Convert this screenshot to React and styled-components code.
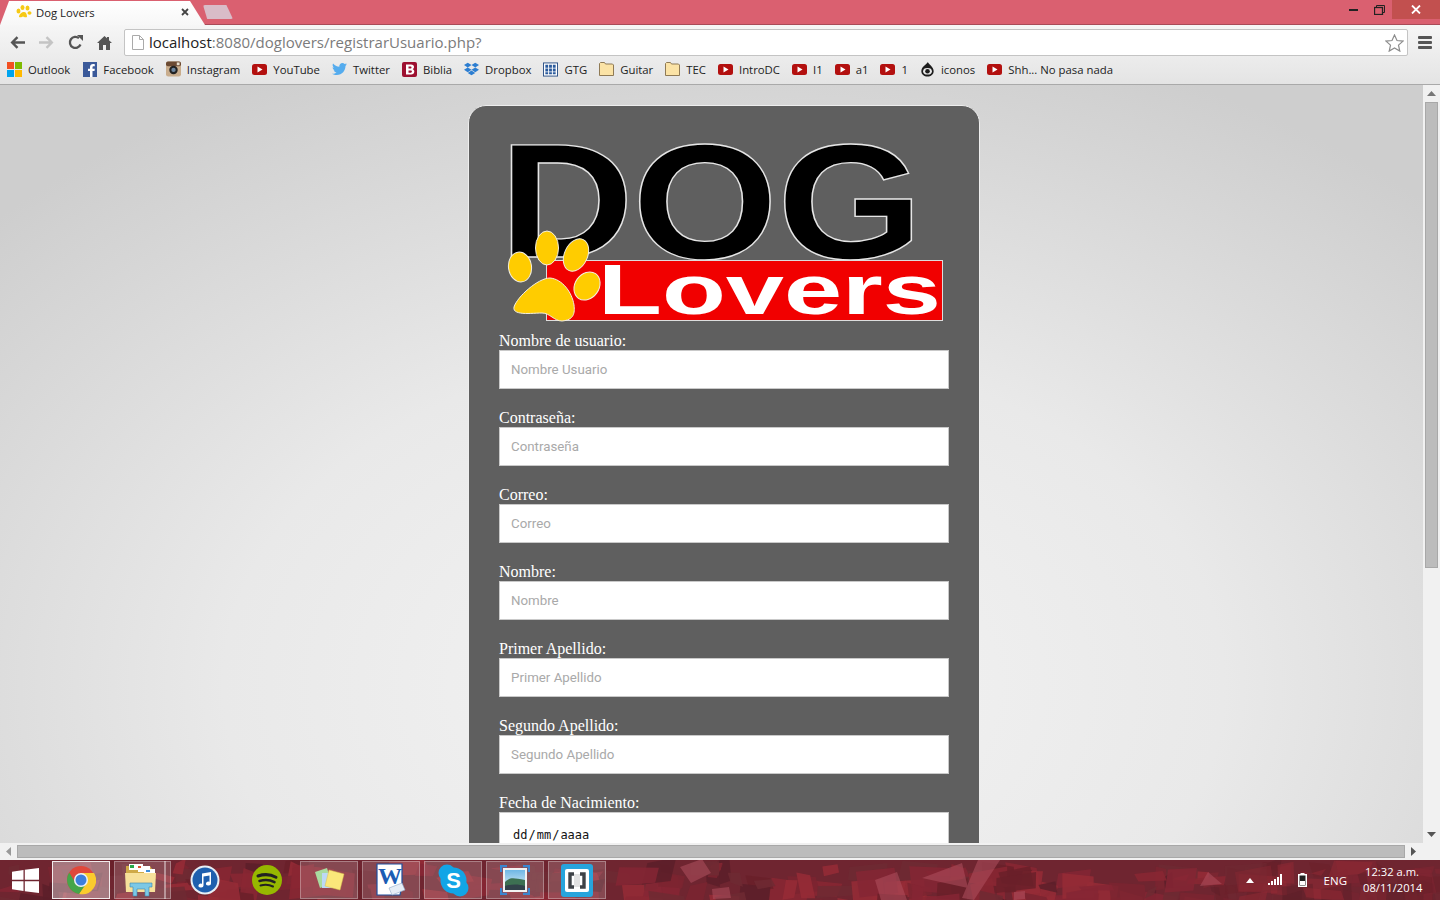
import React from "react";
import styled, { createGlobalStyle } from "styled-components";
import { FaTwitter, FaDropbox } from "react-icons/fa";

const Global = createGlobalStyle`
  html, body { margin: 0; height: 100%; overflow: hidden; }
  * { box-sizing: border-box; }
`;

const Screen = styled.div`
  width: 1440px;
  height: 900px;
  display: flex;
  flex-direction: column;
  overflow: hidden;
  font-family: "Open Sans", "Liberation Sans", sans-serif;
`;

/* ---------- window title strip ---------- */
const TabStrip = styled.div`
  height: 25px;
  flex: none;
  display: flex;
  align-items: flex-end;
  background: #da6070;
  border-bottom: 1px solid #a94b58;
`;
const Tab = styled.div`
  width: 205px;
  height: 24px;
  margin-bottom: -1px;
  padding: 0 16px 2px 16px;
  display: flex;
  align-items: center;
  gap: 4px;
  background: linear-gradient(#ffffff, #f7f7f7);
  clip-path: polygon(0 100%, 9px 0, 190px 0, 100% 100%);
  font-size: 11.3px;
  color: #222;
`;
const TabTitle = styled.span`
  flex: 1;
`;
const TabClose = styled.svg`
  width: 8px;
  height: 8px;
`;
const NewTab = styled.div`
  width: 30px;
  height: 14px;
  margin: 0 0 5px -2px;
  background: #d9bcc8;
  border-radius: 2px;
  clip-path: polygon(0 0, 78% 0, 100% 100%, 14% 100%);
`;
const StripSpace = styled.div`
  flex: 1;
`;
const WinControls = styled.div`
  align-self: flex-start;
  display: flex;
  height: 19px;
`;
const WinIcon = styled.div`
  width: ${(p) => p.$w}px;
  display: flex;
  align-items: center;
  justify-content: center;
  background: ${(p) => p.$bg || "transparent"};
`;

/* ---------- toolbar ---------- */
const Toolbar = styled.div`
  height: 32px;
  flex: none;
  display: flex;
  align-items: center;
  padding: 3px 0 0 3px;
  background: linear-gradient(#f6f6f6, #ececec);
`;
const NavBtn = styled.div`
  width: 29px;
  height: 24px;
  flex: none;
  display: flex;
  align-items: center;
  justify-content: center;
`;
const Omnibox = styled.div`
  width: 1284px;
  height: 27px;
  flex: none;
  margin: 0 2px 0 5px;
  padding: 0 3px 0 7px;
  display: flex;
  align-items: center;
  background: #fff;
  border: 1px solid #c4c4c4;
  border-radius: 2px;
`;
const Url = styled.div`
  flex: 1;
  margin-left: 5px;
  padding-bottom: 2px;
  font-size: 15px;
  color: #7b7b7b;
  white-space: nowrap;
`;
const Host = styled.span`
  color: #222;
`;

/* ---------- bookmarks ---------- */
const Bookmarks = styled.div`
  height: 28px;
  flex: none;
  display: flex;
  align-items: center;
  padding: 0 0 3px 7px;
  gap: 12px;
  background: linear-gradient(#ececec, #e4e4e4);
  border-bottom: 1px solid #a9a9a9;
`;
const Mark = styled.div`
  display: flex;
  align-items: center;
  gap: 6px;
  font-size: 11.35px;
  color: #222;
  white-space: nowrap;
`;
const MarkIcon = styled.div`
  width: 15px;
  height: 15px;
  display: flex;
  align-items: center;
  justify-content: center;
`;

/* ---------- page ---------- */
const Middle = styled.div`
  flex: 1;
  min-height: 0;
  display: flex;
`;
const Viewport = styled.div`
  flex: 1;
  min-width: 0;
  overflow: hidden;
  padding-top: 20px;
  background: radial-gradient(ellipse 1000px 680px at 724px 600px, #f4f4f4 0%, #e9e9e9 50%, #cecece 100%);
`;
const Card = styled.div`
  width: 512px;
  margin-left: 468px;
  padding: 0 30px 40px;
  background: #5f5f5f;
  border: 1px solid #eeeeee;
  border-radius: 18px;
`;
const Logo = styled.svg`
  display: block;
  width: 455px;
  height: 219px;
  margin: 0 0 7px -4px;
  overflow: visible;
`;
const Field = styled.div`
  margin-bottom: 20px;
`;
const Label = styled.label`
  display: block;
  height: 18px;
  font: 16px/18px "Liberation Serif", serif;
  color: #fff;
`;
const TextInput = styled.input`
  display: block;
  width: 450px;
  height: 39px;
  padding: 0 11px 1px;
  background: #fff;
  border: 1px solid #c9c9c9;
  border-radius: 0;
  outline: none;
  font: 13.3px "Roboto", "Liberation Sans", sans-serif;
  &::placeholder {
    color: #a9a9a9;
    opacity: 1;
  }
`;
const DateBox = styled.div`
  width: 450px;
  height: 39px;
  padding: 7px 0 0 13px;
  display: flex;
  align-items: center;
  gap: 1px;
  background: #fff;
  border: 1px solid #c9c9c9;
  font: 12px "DejaVu Sans Mono", monospace;
  color: #111;
`;

/* ---------- scrollbars ---------- */
const VBar = styled.div`
  width: 17px;
  flex: none;
  padding: 17px 2px 0;
  position: relative;
  background: #f1f1f1;
`;
const VThumb = styled.div`
  height: 466px;
  background: #bcbcbc;
  border: 1px solid #a8a8a8;
`;
const HBar = styled.div`
  height: 17px;
  flex: none;
  display: flex;
  align-items: center;
  background: #f1f1f1;
`;
const HThumb = styled.div`
  width: 1388px;
  height: 13px;
  margin-left: 4px;
  background: #bcbcbc;
  border: 1px solid #a8a8a8;
`;
const ArrowBtn = styled.svg`
  position: absolute;
  width: 9px;
  height: 9px;
  left: 4px;
  top: ${(p) => p.$top}px;
`;
const HArrow = styled.svg`
  width: 9px;
  height: 9px;
  margin-left: ${(p) => p.$ml}px;
`;

/* ---------- taskbar ---------- */
const Taskbar = styled.div`
  height: 40px;
  flex: none;
  position: relative;
  display: flex;
  align-items: center;
  overflow: hidden;
  background: #6f2530;
`;
const Wallpaper = styled.svg`
  position: absolute;
  inset: 0;
  width: 1440px;
  height: 40px;
`;
const StartBtn = styled.div`
  position: relative;
  width: 52px;
  padding-left: 12px;
  line-height: 0;
`;
const Apps = styled.div`
  position: relative;
  display: flex;
  gap: 4px;
`;
const AppBtn = styled.div`
  position: relative;
  width: ${(p) => (p.$stack ? 52 : 58)}px;
  height: 38px;
  margin-right: ${(p) => (p.$stack ? 6 : 0)}px;
  display: flex;
  align-items: center;
  justify-content: center;
  background: ${(p) =>
    p.$active ? "rgba(255,255,255,.38)" : p.$open ? "rgba(255,255,255,.16)" : "transparent"};
  border: ${(p) =>
    p.$active ? "1px solid rgba(255,255,255,.85)" : p.$open ? "1px solid rgba(255,255,255,.3)" : "none"};
  ${(p) =>
    p.$stack &&
    `&::after {
      content: "";
      position: absolute;
      top: -1px;
      bottom: -1px;
      right: -6px;
      width: 5px;
      background: rgba(255,255,255,.16);
      border: 1px solid rgba(255,255,255,.3);
    }`}
`;
const Tray = styled.div`
  position: relative;
  margin-left: auto;
  display: flex;
  align-items: center;
  padding-right: 19px;
  color: #fff;
`;
const Lang = styled.div`
  margin: 0 16px 0 17px;
  font-size: 11.5px;
`;
const Clock = styled.div`
  width: 58px;
  text-align: center;
  font-size: 11.2px;
  line-height: 16px;
`;

const Youtube = () => (
  <svg width="15" height="11" viewBox="0 0 15 11">
    <rect width="15" height="11" rx="2.5" fill="#b3100f" />
    <path d="M5.5 2.6 10.5 5.5 5.5 8.4z" fill="#fff" />
  </svg>
);
const Folder = () => (
  <svg width="15" height="14" viewBox="0 0 15 14">
    <path d="M.5 3V1.5l1-1h4l1 1.5h7l1 1v10.500h-14z" fill="#fbe3a6" stroke="#8f7a55" />
  </svg>
);
const PawSmall = () => (
  <svg width="16" height="14" viewBox="0 0 16 14" fill="#f6c915">
    <ellipse cx="2.500" cy="6" rx="2" ry="2.500" />
    <ellipse cx="6.500" cy="2.500" rx="2" ry="2.500" />
    <ellipse cx="11.500" cy="3" rx="2" ry="2.500" />
    <ellipse cx="13.500" cy="8" rx="2" ry="1.800" />
    <path d="M3 12c0-3 3-5 5-5s3 2 3 5c-2 1-3-.5-4-.5s-2 1.500-4 .5z" />
  </svg>
);

const bookmarks = [
  ["Outlook", (
    <svg width="15" height="15" viewBox="0 0 15 15">
      <rect width="7" height="7" fill="#f25022" />
      <rect x="8" width="7" height="7" fill="#7fba00" />
      <rect y="8" width="7" height="7" fill="#00a4ef" />
      <rect x="8" y="8" width="7" height="7" fill="#ffb900" />
    </svg>
  )],
  ["Facebook", (
    <svg width="14" height="15" viewBox="0 0 14 15">
      <rect width="14" height="15" fill="#3b5a9a" />
      <path d="M9.500 15V9h2l.3-2.300H9.500V5.300c0-.7.3-1.100 1.100-1.100h1.200V2.200C11.400 2.100 10.800 2 10.100 2 8.300 2 7 3.100 7 5.100v1.600H5V9h2v6z" fill="#fff" />
    </svg>
  )],
  ["Instagram", (
    <svg width="16" height="16" viewBox="0 0 16 16">
      <rect width="16" height="16" rx="2.500" fill="#c9ad8d" />
      <rect width="16" height="5" rx="2" fill="#6b4a33" />
      <circle cx="8" cy="9" r="4.500" fill="#222" />
      <circle cx="8" cy="9" r="2.300" fill="#6d86a0" />
      <rect x="11.500" y="1" width="3" height="3" fill="#e8e0d0" />
    </svg>
  )],
  ["YouTube", <Youtube />],
  ["Twitter", <FaTwitter size={16} color="#55acee" />],
  ["Biblia", (
    <svg width="15" height="15" viewBox="0 0 15 15">
      <rect width="15" height="15" rx="2" fill="#9d1030" />
      <path d="M4 2.500h5c2 0 3 1 3 2.500 0 1-.5 1.800-1.300 2.200 1 .4 1.600 1.200 1.600 2.400 0 1.900-1.300 3-3.300 3H4zm2.500 2v2h2c.7 0 1-.4 1-1s-.3-1-1-1zm0 4v2.200h2.300c.7 0 1.100-.4 1.100-1.100s-.4-1.100-1.100-1.100z" fill="#fff" />
    </svg>
  )],
  ["Dropbox", <FaDropbox size={16} color="#2d7ed1" />],
  ["GTG", (
    <svg width="16" height="15" viewBox="0 0 16 15">
      <rect x=".5" y=".5" width="15" height="14" fill="#fff" stroke="#2a4f86" />
      <path d="M2.500 2.500h3v3h-3zM6.500 2.500h3v3h-3zM10.500 2.500h3v3h-3zM2.500 6.500h3v3h-3zM6.500 6.500h3v3h-3zM10.500 6.500h3v3h-3zM2.500 10.500h3v2h-3zM6.500 10.500h3v2h-3zM10.500 10.500h3v2h-3z" fill="#2a5a9c" />
    </svg>
  )],
  ["Guitar", <Folder />],
  ["TEC", <Folder />],
  ["IntroDC", <Youtube />],
  ["I1", <Youtube />],
  ["a1", <Youtube />],
  ["1", <Youtube />],
  ["iconos", (
    <svg width="17" height="17" viewBox="0 0 17 17">
      <path d="M9 0c0 2 6.500 5 6.500 10.500 0 3.500-3.200 6-7 6s-7-2.500-7-6C1.500 5.500 7 3 9 0z" fill="#1c1c1c" />
      <ellipse cx="8.500" cy="10.500" rx="5" ry="3.800" fill="#e8e8e8" />
      <circle cx="8.500" cy="10.500" r="2.600" fill="#1c1c1c" />
    </svg>
  )],
  ["Shh... No pasa nada", <Youtube />],
];

const fields = [
  ["Nombre de usuario:", "Nombre Usuario"],
  ["Contraseña:", "Contraseña"],
  ["Correo:", "Correo"],
  ["Nombre:", "Nombre"],
  ["Primer Apellido:", "Primer Apellido"],
  ["Segundo Apellido:", "Segundo Apellido"],
];

const Windows = () => (
  <svg width="27" height="25" viewBox="0 0 27 25" fill="#fff">
    <path d="M0 3.700 11.500 2v9.800H0zM12.800 1.800 27 0v11.800H12.800zM0 13.200h11.500V23L0 21.300zM12.800 13.200H27V25l-14.200-1.800z" />
  </svg>
);

const Chrome = () => (
  <svg width="30" height="30" viewBox="0 0 30 30">
    <circle cx="15" cy="15" r="14" fill="#e0483b" />
    <path d="M15 8h13A14 14 0 0 1 13 28.900L20 17z" fill="#fbcb2d" />
    <path d="M20 19 13 28.900A14 14 0 0 1 3.200 7.500L9.500 18z" fill="#45a54a" />
    <circle cx="15" cy="15" r="7" fill="#eef2f8" />
    <circle cx="15" cy="15" r="5.500" fill="#3d7fdc" />
  </svg>
);

const Explorer = () => (
  <svg width="33" height="34" viewBox="0 0 33 34">
    <path d="M2 3h24l2 3h3v22H2z" fill="#cfa948" />
    <rect x="5" y="1" width="14" height="6" fill="#fff" />
    <rect x="6" y="2" width="4" height="3" fill="#2aa84a" />
    <rect x="14" y="3" width="12" height="6" fill="#fff" />
    <rect x="14" y="3" width="3" height="2" fill="#d9542f" />
    <rect x="20" y="6" width="11" height="5" fill="#fff" />
    <rect x="22" y="7" width="4" height="2" fill="#3f8fd8" />
    <path d="M1 10h31l-1 19H2z" fill="#f7e09a" />
    <path d="M9 33V24H6v-4h22v4h-3v9h-4v-7H13v7z" fill="#7cc8e6" stroke="#3b88b0" strokeWidth=".6" />
  </svg>
);

const Itunes = () => (
  <svg width="30" height="30" viewBox="0 0 30 30">
    <circle cx="15" cy="15" r="14.500" fill="#e8eef4" />
    <circle cx="15" cy="15" r="12.500" fill="#1f5fae" />
    <path d="M12 8.500 21 7v11.500a2.500 2 0 1 1-1.500-1.800V10.500l-6 1v9a2.500 2 0 1 1-1.500-1.800z" fill="#fff" />
  </svg>
);

const Spotify = () => (
  <svg width="30" height="30" viewBox="0 0 30 30" fill="none" stroke="#222" strokeLinecap="round">
    <circle cx="15" cy="15" r="15" fill="#97b800" stroke="none" />
    <path d="M6 11c6-2 13-1.500 18 1.200" strokeWidth="3" />
    <path d="M7.500 16c5-1.500 11-1 15 1.200" strokeWidth="2.500" />
    <path d="M8.500 20.500c4.500-1.200 9-.8 12.500 1" strokeWidth="2" />
  </svg>
);

const Sticky = () => (
  <svg width="32" height="30" viewBox="0 0 32 30">
    <path d="M2 7 14 3l5 16-12 4z" fill="#a9dba0" />
    <path d="M9 8h14v15H9z" fill="#bcd8f5" />
    <path d="M16 5l15 4-4 16-15-4z" fill="#fbe77a" stroke="#d8c050" strokeWidth=".5" />
  </svg>
);

const Word = () => (
  <svg width="30" height="34" viewBox="0 0 30 34">
    <path d="M1 1h25v20l-2 11H1z" fill="#fff" stroke="#1e4f9e" strokeWidth="1.200" />
    <path d="M13 25l13-5 3 7-13 5z" fill="#e6edf6" stroke="#8fa8c8" strokeWidth=".6" />
    <text x="14" y="21" textAnchor="middle" fontFamily="Liberation Serif, serif" fontWeight="700" fontSize="24" fill="#1b5cb4">W</text>
  </svg>
);

const Skype = () => (
  <svg width="31" height="33" viewBox="0 0 31 33">
    <circle cx="9" cy="9" r="8.500" fill="#12a5e6" />
    <circle cx="22" cy="24" r="8.500" fill="#12a5e6" />
    <circle cx="15.500" cy="16.500" r="13" fill="#12a5e6" />
    <text x="15.500" y="24" textAnchor="middle" fontFamily="Liberation Sans, sans-serif" fontWeight="700" fontSize="22" fill="#fff">S</text>
  </svg>
);

const Photos = () => (
  <svg width="30" height="30" viewBox="0 0 30 30">
    <defs>
      <linearGradient id="sky" x1="0" y1="0" x2="0" y2="1">
        <stop offset="0" stopColor="#6fb7e6" />
        <stop offset="1" stopColor="#e6f2f6" />
      </linearGradient>
    </defs>
    <rect x="3" y="3" width="24" height="24" fill="#f2f2f2" />
    <rect x="5" y="5" width="20" height="20" fill="url(#sky)" />
    <path d="M5 17c5-5 8-4 20-2v10H5z" fill="#3d7052" />
    <path d="M5 21c6-2 14-2 20 0v4H5z" fill="#32424a" />
    <path d="M1 7V1h6M23 1h6v6M29 23v6h-6M7 29H1v-6" fill="none" stroke="#3a86d0" strokeWidth="2.400" />
  </svg>
);

const Brackets = () => (
  <svg width="32" height="33" viewBox="0 0 32 33">
    <rect width="32" height="33" rx="3" fill="#27a4dc" />
    <rect x="4" y="5" width="24" height="23" rx="2" fill="#fff" />
    <rect x="13" y="10" width="6" height="13" fill="#e2e2e2" />
    <path d="M13 10H9v13h4M19 10h4v13h-4" fill="none" stroke="#3e4247" strokeWidth="3.400" />
  </svg>
);

// the wallpaper shows through the taskbar as small red facets
const reds = ["#5c1f29", "#6a2029", "#7b2430", "#8a2732", "#972b36", "#6e2a33", "#852634"];
let seed = 7;
const rnd = (n) => {
  seed = (seed * 16807) % 2147483647;
  return (seed / 2147483647) * n;
};
const facets = Array.from({ length: 230 }, () => {
  const x = rnd(1440);
  const y = rnd(40);
  const a = 8 + rnd(34);
  const b = 6 + rnd(20);
  const d = `M${x} ${y}l${a} ${rnd(14) - 7}l${rnd(12) - 6} ${b}l${-a} ${rnd(10) - 5}z`;
  const c = reds[Math.floor(rnd(reds.length))];
  return { d, c, o: x > 1200 ? 0.45 : 0.85 };
});
const ribbons = [
  "M680 867l22-8 9 14-20 10z", "M712 889l17-2 2 11-18 1z", "M875 880l22-8 10 28h-26z",
  "M922 878l40-15 6 25z", "M978 860l22 0-26 40-12-2z", "M1014 892l11-1 0 8-11 1z", "M1208 872l14 12-22 2z",
];

export default function App() {
  return (
    <Screen>
      <Global />
      <TabStrip>
        <Tab>
          <PawSmall />
          <TabTitle>Dog Lovers</TabTitle>
          <TabClose viewBox="0 0 8 8">
            <path d="M1 1l6 6M7 1 1 7" stroke="#444" strokeWidth="1.800" />
          </TabClose>
        </Tab>
        <NewTab />
        <StripSpace />
        <WinControls>
          <WinIcon $w={26}>
            <svg width="9" height="3" viewBox="0 0 9 3"><rect y="1" width="9" height="2" fill="#222" /></svg>
          </WinIcon>
          <WinIcon $w={26}>
            <svg width="11" height="10" viewBox="0 0 11 10" fill="none" stroke="#222">
              <path d="M2.500 2V.5h8v7H8.500" />
              <rect x=".5" y="2.500" width="8" height="7" strokeWidth="1.300" />
            </svg>
          </WinIcon>
          <WinIcon $w={48} $bg="#c2504f">
            <svg width="10" height="9" viewBox="0 0 10 9"><path d="M1 .5l8 8M9 .5l-8 8" stroke="#fff" strokeWidth="1.800" /></svg>
          </WinIcon>
        </WinControls>
      </TabStrip>

      <Toolbar>
        <NavBtn>
          <svg width="15" height="13" viewBox="0 0 15 13" fill="none" stroke="#555" strokeWidth="2.400">
            <path d="M15 6.500H2.500M7.500 1.200 2.200 6.500l5.300 5.300" />
          </svg>
        </NavBtn>
        <NavBtn>
          <svg width="15" height="13" viewBox="0 0 15 13" fill="none" stroke="#c4c4c4" strokeWidth="2.400">
            <path d="M0 6.500h12.500M7.500 1.200l5.300 5.300-5.300 5.300" />
          </svg>
        </NavBtn>
        <NavBtn>
          <svg width="15" height="15" viewBox="0 0 15 15" fill="none">
            <path d="M12.500 9.500A5.500 5.500 0 1 1 11 3.200" stroke="#555" strokeWidth="2.300" />
            <path d="M9 0l6 0v6z" fill="#555" />
          </svg>
        </NavBtn>
        <NavBtn>
          <svg width="15" height="14" viewBox="0 0 15 14" fill="#555">
            <path d="M7.500 0 0 7h2v7h4V9h3v5h4V7h2l-3-2.800V1h-2v1.300z" />
          </svg>
        </NavBtn>
        <Omnibox>
          <svg width="12" height="15" viewBox="0 0 12 15" fill="#fff" stroke="#aaa">
            <path d="M.5.500h7l4 4v10H.500z" />
            <path d="M7.500.500v4h4" fill="none" />
          </svg>
          <Url><Host>localhost</Host>:8080/doglovers/registrarUsuario.php?</Url>
          <svg width="19" height="18" viewBox="0 0 19 18" fill="#fff" stroke="#8c8c8c" strokeWidth="1.200">
            <path d="M9.500 1l2.500 5.500 6 .6-4.500 4 1.300 6-5.300-3.100-5.300 3.100 1.300-6-4.500-4 6-.6z" />
          </svg>
        </Omnibox>
        <NavBtn>
          <svg width="14" height="13" viewBox="0 0 14 13" fill="#555">
            <rect width="14" height="3" rx="1" />
            <rect y="5" width="14" height="3" rx="1" />
            <rect y="10" width="14" height="3" rx="1" />
          </svg>
        </NavBtn>
      </Toolbar>

      <Bookmarks>
        {bookmarks.map(([name, icon]) => (
          <Mark key={name}>
            <MarkIcon>{icon}</MarkIcon>
            {name}
          </Mark>
        ))}
      </Bookmarks>

      <Middle>
        <Viewport>
          <Card>
            <Logo viewBox="495 106 455 219">
              <g fontFamily="Liberation Sans, sans-serif" fontWeight="700" fontSize="163" fill="#000" stroke="#e6e6e6" strokeWidth="1.300">
                <text x="499" y="257" textLength="135" lengthAdjust="spacingAndGlyphs">D</text>
                <text x="632" y="258" textLength="146" lengthAdjust="spacingAndGlyphs">O</text>
                <text x="777" y="258" textLength="146" lengthAdjust="spacingAndGlyphs">G</text>
              </g>
              <rect x="546.500" y="260.500" width="396" height="60" fill="#f10000" stroke="#ddd" />
              <text x="598" y="314" textLength="343" lengthAdjust="spacingAndGlyphs" fontFamily="Liberation Sans, sans-serif" fontWeight="700" fontSize="70" fill="#fff">Lovers</text>
              <g fill="#ffcc00" stroke="#f3efe0" strokeWidth="1">
                <ellipse cx="520" cy="267" rx="11.500" ry="15" transform="rotate(-8 520 267)" />
                <ellipse cx="547" cy="248" rx="11.500" ry="17" />
                <ellipse cx="576" cy="255" rx="11.500" ry="17" transform="rotate(25 576 255)" />
                <ellipse cx="587" cy="286" rx="12" ry="15" transform="rotate(35 587 286)" />
                <path d="M514 307c3-10 24-29 36-29 12 1 22 14 24 27 1 8 0 15-12 16-8 0-12-8-20-8-10 0-30 3-28-6z" />
              </g>
            </Logo>
            {fields.map(([label, hint]) => (
              <Field key={label}>
                <Label>{label}</Label>
                <TextInput placeholder={hint} />
              </Field>
            ))}
            <Field>
              <Label>Fecha de Nacimiento:</Label>
              <DateBox>
                <span>dd</span><span>/</span><span>mm</span><span>/</span><span>aaaa</span>
              </DateBox>
            </Field>
          </Card>
        </Viewport>
        <VBar>
          <ArrowBtn $top={4} viewBox="0 0 9 9"><path d="M0 7h9L4.500 2z" fill="#777" /></ArrowBtn>
          <VThumb />
          <ArrowBtn $top={745} viewBox="0 0 9 9"><path d="M0 2h9L4.500 7z" fill="#555" /></ArrowBtn>
        </VBar>
      </Middle>
      <HBar>
        <HArrow $ml={4} viewBox="0 0 9 9"><path d="M7 0v9L2 4.500z" fill="#999" /></HArrow>
        <HThumb />
        <HArrow $ml={4} viewBox="0 0 9 9"><path d="M2 0v9l5-4.500z" fill="#555" /></HArrow>
      </HBar>

      <Taskbar>
        <Wallpaper viewBox="0 0 1440 40">
          {facets.map((f) => <path key={f.d} d={f.d} fill={f.c} opacity={f.o} />)}
          <g transform="translate(0 -860)" fill="#b0505f" opacity=".55">
            {ribbons.map((d) => <path key={d} d={d} />)}
          </g>
        </Wallpaper>
        <StartBtn><Windows /></StartBtn>
        <Apps>
          <AppBtn $active><Chrome /></AppBtn>
          <AppBtn $open $stack><Explorer /></AppBtn>
          <AppBtn><Itunes /></AppBtn>
          <AppBtn><Spotify /></AppBtn>
          <AppBtn $open><Sticky /></AppBtn>
          <AppBtn $open><Word /></AppBtn>
          <AppBtn $open><Skype /></AppBtn>
          <AppBtn $open><Photos /></AppBtn>
          <AppBtn $open><Brackets /></AppBtn>
        </Apps>
        <Tray>
          <svg width="8" height="5" viewBox="0 0 8 5"><path d="M0 5h8L4 0z" fill="#fff" /></svg>
          <svg width="15" height="12" viewBox="0 0 15 12" fill="#fff" style={{ marginLeft: 14 }}>
            <rect y="9" width="2" height="2" /><rect x="3" y="7" width="2" height="4" /><rect x="6" y="5" width="2" height="6" /><rect x="9" y="3" width="2" height="8" /><rect x="12" y="0" width="2" height="11" />
          </svg>
          <svg width="9" height="14" viewBox="0 0 9 14" style={{ marginLeft: 15 }}>
            <rect x="2.500" y="0" width="4" height="2" fill="#fff" />
            <rect x=".75" y="1.750" width="7.500" height="11.500" fill="#222" stroke="#fff" strokeWidth="1.500" />
            <rect x="2" y="8" width="5" height="4" fill="#fff" />
          </svg>
          <Lang>ENG</Lang>
          <Clock>12:32 a.m.<br />08/11/2014</Clock>
        </Tray>
      </Taskbar>
    </Screen>
  );
}
